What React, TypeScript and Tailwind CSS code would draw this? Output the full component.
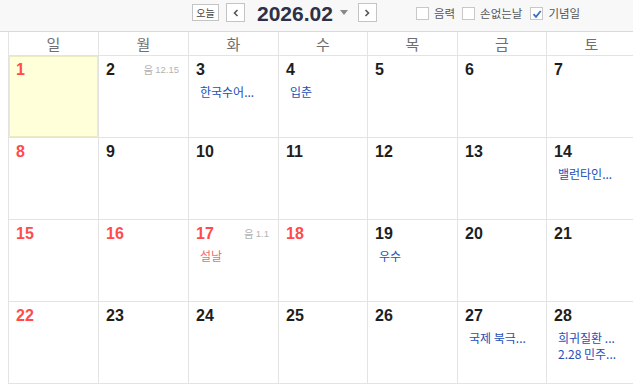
import React from "react";

type Ev = { t: string; red?: boolean };
type Day = { d: number; red?: boolean; today?: boolean; lunar?: string; ev?: Ev[] };

const weeks: Day[][] = [
  [
    { d: 1, red: true, today: true },
    { d: 2, lunar: "12.15" },
    { d: 3, ev: [{ t: "한국수어..." }] },
    { d: 4, ev: [{ t: "입춘" }] },
    { d: 5 },
    { d: 6 },
    { d: 7 },
  ],
  [
    { d: 8, red: true },
    { d: 9 },
    { d: 10 },
    { d: 11 },
    { d: 12 },
    { d: 13 },
    { d: 14, ev: [{ t: "밸런타인..." }] },
  ],
  [
    { d: 15, red: true },
    { d: 16, red: true },
    { d: 17, red: true, lunar: "1.1", ev: [{ t: "설날", red: true }] },
    { d: 18, red: true },
    { d: 19, ev: [{ t: "우수" }] },
    { d: 20 },
    { d: 21 },
  ],
  [
    { d: 22, red: true },
    { d: 23 },
    { d: 24 },
    { d: 25 },
    { d: 26 },
    { d: 27, ev: [{ t: "국제 북극..." }] },
    { d: 28, ev: [{ t: "희귀질환 ..." }, { t: "2.28 민주..." }] },
  ],
];

const heads = ["일", "월", "화", "수", "목", "금", "토"];

const KR = { fontFamily: '"Noto Sans CJK KR", "Noto Sans", sans-serif' };
const NUM = { fontFamily: '"Liberation Sans", Arial, sans-serif' };

function Box({ checked }: { checked?: boolean }) {
  return (
    <span className="w-[13px] h-[13px] border border-[#c8c8c8] bg-white flex items-center justify-center">
      {checked && (
        <svg width="10" height="10" viewBox="0 0 10 10">
          <path d="M1.5 5.2 L4 7.8 L8.7 2" fill="none" stroke="#3c6fc4" strokeWidth="1.8" />
        </svg>
      )}
    </span>
  );
}

export default function App() {
  return (
    <div className="w-[633px] h-[384px] overflow-hidden bg-white relative" style={KR}>
      {/* toolbar */}
      <div className="h-[32px] bg-[#f8f8f8] border-b border-[#dadada] flex items-start">
        <div className="ml-[192px] mt-[4px] w-[27px] h-[17px] border border-[#c4c4c4] bg-white flex items-center justify-center text-[10px] text-[#444] leading-none">
          오늘
        </div>
        <div className="ml-[7px] mt-[3px] w-[19px] h-[19px] border border-[#c4c4c4] bg-white flex items-center justify-center">
          <svg width="8" height="8" viewBox="0 0 8 8">
            <path d="M5.5 1 L2.5 4 L5.5 7" fill="none" stroke="#555" strokeWidth="1.6" />
          </svg>
        </div>
        <div
          className="ml-[12px] mt-[1px] text-[21px] font-bold text-[#2d3047] leading-[26px] tracking-[0px]"
          style={NUM}
        >
          2026.02
        </div>
        <svg className="ml-[7px] mt-[10px]" width="8" height="5" viewBox="0 0 8 5">
          <path d="M0 0 L8 0 L4 5 Z" fill="#888" />
        </svg>
        <div className="ml-[10px] mt-[3px] w-[19px] h-[19px] border border-[#c4c4c4] bg-white flex items-center justify-center">
          <svg width="8" height="8" viewBox="0 0 8 8">
            <path d="M2.5 1 L5.5 4 L2.5 7" fill="none" stroke="#555" strokeWidth="1.6" />
          </svg>
        </div>
        <div className="ml-[39px] mt-[7px] flex items-center text-[11.5px] text-[#555] leading-none">
          <Box />
          <span className="ml-[5px]">음력</span>
          <span className="ml-[7px]" />
          <Box />
          <span className="ml-[5px]">손없는날</span>
          <span className="ml-[8px]" />
          <Box checked />
          <span className="ml-[5px]">기념일</span>
        </div>
      </div>

      {/* grid */}
      <div className="ml-[8px] w-[629px] border-l border-[#e3e3e3]">
        <div className="grid grid-cols-[90px_90px_90px_89px_90px_89px_90px] h-[24px]">
          {heads.map((h) => (
            <div
              key={h}
              className="border-r border-b border-[#e3e3e3] flex items-center justify-center text-[15px] text-[#707070] leading-none"
            >
              {h}
            </div>
          ))}
        </div>
        {weeks.map((w, i) => (
          <div key={i} className="grid grid-cols-[90px_90px_90px_89px_90px_89px_90px] h-[82px]">
            {w.map((c) => (
              <div
                key={c.d}
                className={
                  "border-r border-b border-[#e3e3e3] pt-[4px] " +
                  (c.today ? "bg-[#ffffd9] shadow-[inset_0_0_0_1px_#ecebc4]" : "")
                }
              >
                <div className="flex items-center h-[20px] pl-[7px] pr-[9px]">
                  <span
                    className={
                      "text-[16px] font-bold leading-none " + (c.red ? "text-[#ff4b4b]" : "text-[#1e1e1e]")
                    }
                    style={NUM}
                  >
                    {c.d}
                  </span>
                  {c.lunar && (
                    <span className="ml-auto flex items-center text-[#b3b3b3] leading-none">
                      <span className="text-[10.5px]">음</span>
                      <span className="ml-[2px] text-[9.5px]" style={NUM}>
                        {c.lunar}
                      </span>
                    </span>
                  )}
                </div>
                {c.ev && (
                  <div className="mt-[4px] pl-[11px]">
                    {c.ev.map((e) => (
                      <div
                        key={e.t}
                        className={
                          "text-[12px] leading-[16px] whitespace-nowrap " +
                          (e.red ? "text-[#f06a6a]" : "text-[#2450b8]")
                        }
                      >
                        {e.t}
                      </div>
                    ))}
                  </div>
                )}
              </div>
            ))}
          </div>
        ))}
      </div>
    </div>
  );
}
